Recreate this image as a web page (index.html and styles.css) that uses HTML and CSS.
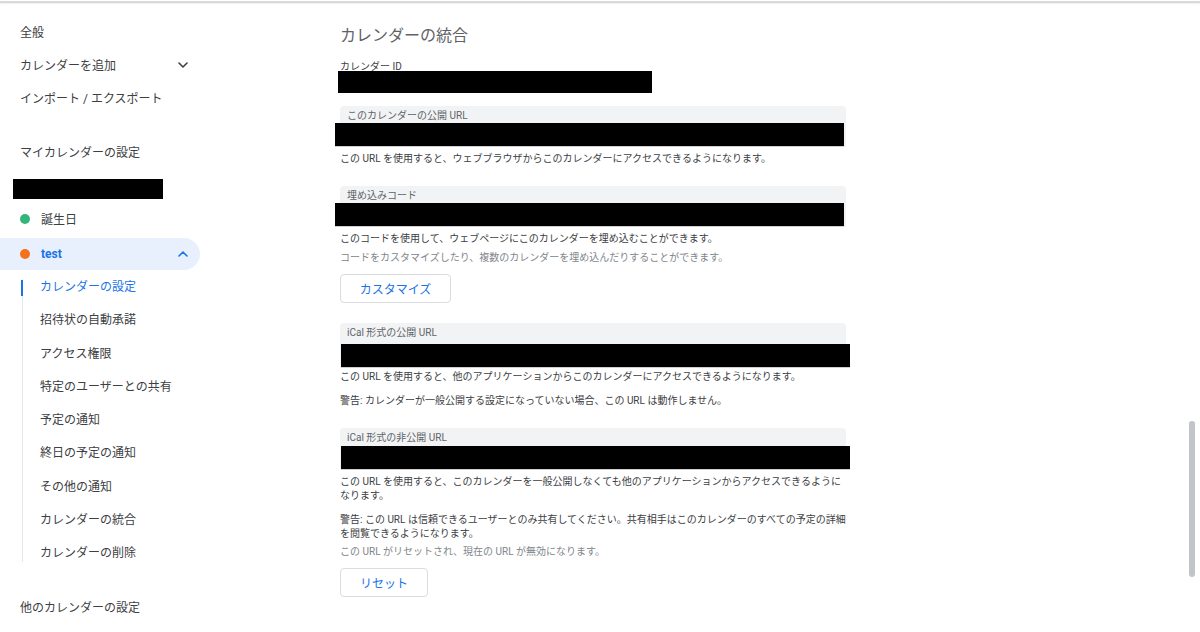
FILE: index.html
```html
<!DOCTYPE html>
<html lang="ja">
<head>
  <meta charset="UTF-8" />
  <meta name="viewport" content="width=device-width, initial-scale=1.0" />
  <title>設定 - カレンダーの統合</title>
  <link rel="stylesheet" href="styles.css">
</head>
<body>
  <div class="topbar"></div>
  <div class="page">
    <nav class="sidebar">
      <div class="nav-item">全般</div>
      <div class="nav-item">カレンダーを追加
        <svg class="chev" viewBox="0 0 10 6" width="10" height="6"><path d="M1 1l4 4 4-4" /></svg>
      </div>
      <div class="nav-item">インポート / エクスポート</div>

      <div class="nav-item section">マイカレンダーの設定</div>
      <div class="redact nav-redact"></div>

      <div class="nav-item cal"><span class="dot green"></span>誕生日</div>
      <div class="nav-item cal open"><span class="dot orange"></span>test
        <svg class="chev up" viewBox="0 0 10 6" width="10" height="6"><path d="M1 5l4-4 4 4" /></svg>
      </div>
      <ul class="sub">
        <li class="active">カレンダーの設定</li>
        <li>招待状の自動承諾</li>
        <li>アクセス権限</li>
        <li>特定のユーザーとの共有</li>
        <li>予定の通知</li>
        <li>終日の予定の通知</li>
        <li>その他の通知</li>
        <li>カレンダーの統合</li>
        <li>カレンダーの削除</li>
      </ul>

      <div class="nav-item section other">他のカレンダーの設定</div>
    </nav>

    <main class="content">
      <h2>カレンダーの統合</h2>

      <div class="id-label">カレンダー ID</div>
      <div class="redact id-redact"></div>

      <div class="field f-public">
        <div class="field-label">このカレンダーの公開 URL</div>
        <div class="redact field-redact"></div>
      </div>
      <p class="desc">この URL を使用すると、ウェブブラウザからこのカレンダーにアクセスできるようになります。</p>

      <div class="field f-embed">
        <div class="field-label">埋め込みコード</div>
        <div class="redact field-redact"></div>
      </div>
      <p class="desc">このコードを使用して、ウェブページにこのカレンダーを埋め込むことができます。</p>
      <p class="desc muted">コードをカスタマイズしたり、複数のカレンダーを埋め込んだりすることができます。</p>
      <button class="btn btn-custom">カスタマイズ</button>

      <div class="field f-ical">
        <div class="field-label">iCal 形式の公開 URL</div>
        <div class="redact field-redact wide"></div>
      </div>
      <p class="desc tight">この URL を使用すると、他のアプリケーションからこのカレンダーにアクセスできるようになります。</p>
      <p class="desc warn">警告: カレンダーが一般公開する設定になっていない場合、この URL は動作しません。</p>

      <div class="field f-private">
        <div class="field-label">iCal 形式の非公開 URL</div>
        <div class="redact field-redact wide"></div>
      </div>
      <p class="desc">この URL を使用すると、このカレンダーを一般公開しなくても他のアプリケーションからアクセスできるようになります。</p>
      <p class="desc warn">警告: この URL は信頼できるユーザーとのみ共有してください。共有相手はこのカレンダーのすべての予定の詳細を閲覧できるようになります。</p>
      <p class="desc muted reset-note">この URL がリセットされ、現在の URL が無効になります。</p>
      <button class="btn btn-reset">リセット</button>
    </main>
  </div>
  <div class="scrollbar"></div>
</body>
</html>
```

FILE: styles.css
```css
body {
  margin: 0;
  padding: 0;
  background: #fff;
  font-family: Roboto, "Noto Sans CJK JP", sans-serif;
  color: #3c4043;
  overflow: hidden;
}
.topbar {
  height: 2px;
  margin-top: 1px;
  background: #dadada;
  box-shadow: 0 1px 1px #efefef;
}
.page {
  display: flex;
}

/* sidebar */
.sidebar {
  width: 200px;
  flex-shrink: 0;
  padding-top: 12px;
  font-size: 12px;
}
.nav-item {
  height: 33px;
  display: flex;
  align-items: center;
  padding-left: 20px;
  padding-right: 12px;
  position: relative;
}
.nav-item.section { margin-top: 21px; }
.chev {
  margin-left: auto;
  fill: none;
  stroke: #3c4043;
  stroke-width: 1.6;
  stroke-linecap: round;
  stroke-linejoin: round;
}
.chev.up { stroke: #1a73e8; }
.redact { background: #000; }
.nav-redact {
  width: 150px;
  height: 20px;
  margin: 11px 0 0 13px;
}
.cal { margin-top: 3px; }
.dot {
  width: 10px;
  height: 10px;
  border-radius: 50%;
  margin: 0 11px 0 0;
}
.green { background: #33b679; }
.orange { background: #f4711e; }
.cal.open {
  margin-top: 3px;
  height: 32px;
  background: #e8f0fe;
  border-radius: 0 16px 16px 0;
  color: #1a73e8;
  font-weight: 700;
}
.sub {
  list-style: none;
  margin: 1px 0 0 22px;
  padding: 0;
  position: relative;
}
.sub::before {
  content: "";
  position: absolute;
  left: 0;
  top: 8px;
  bottom: 9px;
  width: 1px;
  background: #e3e6ea;
}
.sub li {
  height: 33.3px;
  line-height: 33.3px;
  padding-left: 18px;
  position: relative;
}
.sub li.active { color: #1a73e8; }
.sub li.active::before {
  content: "";
  position: absolute;
  left: -1px;
  top: 9px;
  width: 2px;
  height: 16px;
  background: #1a73e8;
}
.nav-item.other { margin-top: 19px; }

/* content */
.content {
  padding-left: 140px;
  width: 510px;
  font-size: 10px;
}
.content h2 {
  margin: 22px 0 0;
  font-size: 16px;
  font-weight: 400;
  line-height: 22px;
  color: #5f6368;
}
.id-label {
  margin-top: 13px;
  font-size: 10px;
  line-height: 14px;
}
.id-redact {
  width: 314px;
  height: 22px;
  margin: -3px 0 0 -2px;
}
.field {
  width: 506px;
  background: #f1f3f4;
  border-radius: 4px 4px 0 0;
}
.field-label {
  padding-left: 7px;
  height: 17px;
  line-height: 20px;
  font-size: 10px;
  color: #5f6368;
}
.field-redact {
  width: 509px;
  height: 23px;
  margin-left: -5px;
  border-bottom: 1px solid #d0d0d0;
}
.field-redact.wide { margin-left: 1px; }
.f-public { margin-top: 13px; }
.f-embed { margin-top: 20px; }
.f-ical { margin-top: 20px; }
.f-ical .field-label { height: 21px; }
.f-private { margin-top: 20px; }
.f-private .field-label { height: 18px; }
.desc {
  margin: 5px 0 0;
  line-height: 14px;
  width: 510px;
}
.desc.tight { margin-top: 2px; }
.desc.muted { color: #80868b; margin-top: 5px; }
.desc.warn { margin-top: 10px; }
.desc.reset-note { margin-top: 4px; }
.btn {
  display: block;
  height: 29px;
  border: 1px solid #dadce0;
  border-radius: 4px;
  background: #fff;
  color: #1a73e8;
  font-family: inherit;
  font-size: 12px;
  padding: 0;
}
.btn-custom { width: 111px; margin-top: 9px; }
.btn-reset { width: 88px; margin-top: 9px; }

.scrollbar {
  position: absolute;
  right: 5px;
  top: 421px;
  width: 6px;
  height: 156px;
  border-radius: 3px;
  background: #c1c4c8;
}
```
